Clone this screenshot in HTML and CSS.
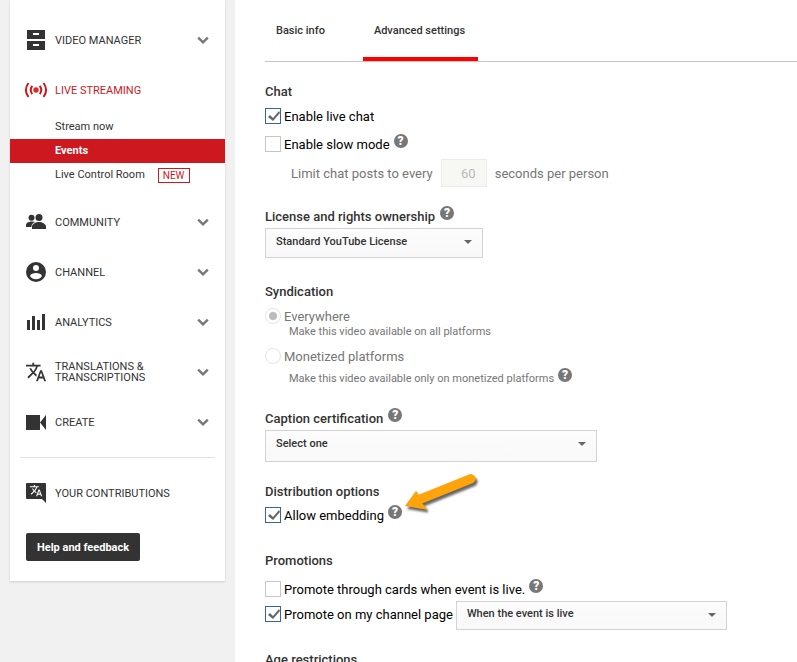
FILE: index.html
```html
<!DOCTYPE html>
<html lang="en">
<head>
    <meta charset="UTF-8">
    <meta name="viewport" content="width=device-width, initial-scale=1.0">
    <title>Live event - Advanced settings</title>
    <link rel="stylesheet" href="styles.css">
</head>
<body>
    <div class="page">
        <aside class="sidebar">
            <nav>
                <a class="nav-item" href="#">
                    <svg class="icon" viewBox="0 0 22 22"><path fill-rule="evenodd" d="M2 1h18v9H2zM8 4v2h6V4zM2 12h18v9H2zM8 15v2h6v-2z"/></svg>
                    <span>VIDEO MANAGER</span>
                    <svg class="chevron" viewBox="0 0 10 8"><path d="M1 2l4 4 4-4"/></svg>
                </a>
                <a class="nav-item active" href="#">
                    <svg class="icon" viewBox="0 0 22 22"><circle cx="11" cy="11" r="2.7"/><path class="wave" d="M7.3 6.8q-3.2 4.200 0 8.400M14.700 6.800q3.200 4.200 0 8.400M3.500 4q-5.200 7 0 14M18.500 4q5.200 7 0 14"/></svg>
                    <span>LIVE STREAMING</span>
                </a>
                <ul class="submenu">
                    <li><a href="#">Stream now</a></li>
                    <li class="selected"><a href="#">Events</a></li>
                    <li><a href="#">Live Control Room</a><span class="new">NEW</span></li>
                </ul>
                <a class="nav-item" href="#">
                    <svg class="icon" viewBox="0 0 22 22"><circle cx="6.500" cy="6.700" r="3"/><circle cx="14" cy="6.500" r="3.500"/><path d="M1 16v-2c0-2.500 3.500-3.500 6-3.500 1.200 0 2.300.2 3.200.5C8 12 6.500 13.300 6.300 16zM7 18v-2.500c0-2.500 4-4.500 7-4.500s7 2 7 4.500V18z"/></svg>
                    <span>COMMUNITY</span>
                    <svg class="chevron" viewBox="0 0 10 8"><path d="M1 2l4 4 4-4"/></svg>
                </a>
                <a class="nav-item" href="#">
                    <svg class="icon" viewBox="0 0 22 22"><path fill-rule="evenodd" d="M11 1a10 10 0 1 0 0 20 10 10 0 0 0 0-20zM11 4a3 3 0 1 1 0 6 3 3 0 0 1 0-6zM11 18.200a7.200 7.200 0 0 1-6-3.200c0-2 4-3.100 6-3.100s6 1.100 6 3.100a7.200 7.200 0 0 1-6 3.200z"/></svg>
                    <span>CHANNEL</span>
                    <svg class="chevron" viewBox="0 0 10 8"><path d="M1 2l4 4 4-4"/></svg>
                </a>
                <a class="nav-item" href="#">
                    <svg class="icon" viewBox="0 0 22 22"><path d="M2 7h3v10H2zM7 3h3v14H7zM12 7h3v10h-3zM17 1h3v16h-3z" transform="translate(0 2)"/></svg>
                    <span>ANALYTICS</span>
                    <svg class="chevron" viewBox="0 0 10 8"><path d="M1 2l4 4 4-4"/></svg>
                </a>
                <a class="nav-item" href="#">
                    <svg class="icon" viewBox="0 0 24 24"><path d="M12.870 15.070l-2.540-2.510.03-.03A17.520 17.520 0 0 0 14.070 6H17V4h-7V2H8v2H1v2h11.170C11.500 7.920 10.440 9.750 9 11.350 8.070 10.320 7.300 9.190 6.690 8h-2c.73 1.630 1.730 3.170 2.980 4.560l-5.090 5.020L4 19l5-5 3.110 3.110.76-2.040zM18.500 10h-2L12 22h2l1.120-3h4.750L21 22h2l-4.500-12zm-2.620 7l1.620-4.330L19.120 17h-3.240z"/></svg>
                    <span>TRANSLATIONS &amp; TRANSCRIPTIONS</span>
                    <svg class="chevron" viewBox="0 0 10 8"><path d="M1 2l4 4 4-4"/></svg>
                </a>
                <a class="nav-item" href="#">
                    <svg class="icon" viewBox="0 0 22 22"><path d="M1 4h14v15H1zM15 11.500L21 4v15z"/></svg>
                    <span>CREATE</span>
                    <svg class="chevron" viewBox="0 0 10 8"><path d="M1 2l4 4 4-4"/></svg>
                </a>
                <hr>
                <a class="nav-item" href="#">
                    <svg class="icon" viewBox="0 0 22 22"><path d="M2 1h18a1 1 0 0 1 1 1v19l-4-4H2a1 1 0 0 1-1-1V2a1 1 0 0 1 1-1z"/><g transform="translate(4.300 2) scale(.56)"><path class="cutout" d="M12.870 15.070l-2.540-2.510.03-.03A17.520 17.520 0 0 0 14.070 6H17V4h-7V2H8v2H1v2h11.170C11.500 7.920 10.440 9.750 9 11.350 8.070 10.320 7.300 9.190 6.690 8h-2c.73 1.630 1.730 3.170 2.980 4.560l-5.090 5.020L4 19l5-5 3.110 3.110.76-2.040zM18.500 10h-2L12 22h2l1.120-3h4.750L21 22h2l-4.500-12zm-2.620 7l1.620-4.330L19.120 17h-3.240z"/></g></svg>
                    <span>YOUR CONTRIBUTIONS</span>
                </a>
            </nav>
            <button class="feedback" type="button">Help and feedback</button>
        </aside>

        <main>
            <div class="tabs">
                <a href="#">Basic info</a>
                <a class="current" href="#">Advanced settings</a>
            </div>
            <form>
                <section>
                    <h3>Chat</h3>
                    <div class="row">
                        <input type="checkbox" id="live-chat" checked>
                        <label for="live-chat">Enable live chat</label>
                    </div>
                    <div class="row slow">
                        <input type="checkbox" id="slow-mode">
                        <label for="slow-mode">Enable slow mode</label>
                        <button class="help" type="button">?</button>
                    </div>
                    <div class="limit">
                        <label for="seconds">Limit chat posts to every</label>
                        <input type="text" id="seconds" value="60" disabled>
                        <span>seconds per person</span>
                    </div>
                </section>

                <section class="wide">
                    <h3><label for="license">License and rights ownership</label> <button class="help" type="button">?</button></h3>
                    <div class="select license">
                        <select id="license"><option>Standard YouTube License</option></select>
                    </div>
                </section>

                <section class="muted">
                    <h3>Syndication</h3>
                    <div class="row">
                        <input type="radio" name="syndication" id="everywhere" checked disabled>
                        <label for="everywhere">Everywhere</label>
                    </div>
                    <p class="near">Make this video available on all platforms</p>
                    <div class="row">
                        <input type="radio" name="syndication" id="monetized" disabled>
                        <label for="monetized">Monetized platforms</label>
                    </div>
                    <p>Make this video available only on monetized platforms <button class="help" type="button">?</button></p>
                </section>

                <section>
                    <h3><label for="caption">Caption certification</label> <button class="help" type="button">?</button></h3>
                    <div class="select caption">
                        <select id="caption"><option>Select one</option></select>
                    </div>
                </section>

                <section class="wide">
                    <h3>Distribution options</h3>
                    <div class="row embed">
                        <input type="checkbox" id="embedding" checked>
                        <label for="embedding">Allow embedding</label>
                        <button class="help" type="button">?</button>
                        <svg class="pointer" viewBox="0 0 80 44"><path d="M2 34L12.500 19.500q2-1 2.500 3.500L66 2.500a4.700 4.700 0 0 1 4 8.500L19 31.500q5 3.500 4 6z"/></svg>
                    </div>
                </section>

                <section>
                    <h3>Promotions</h3>
                    <div class="row cards">
                        <input type="checkbox" id="cards">
                        <label for="cards">Promote through cards when event is live.</label>
                        <button class="help" type="button">?</button>
                    </div>
                    <div class="row channel">
                        <input type="checkbox" id="channel" checked>
                        <label for="channel">Promote on my channel page</label>
                        <div class="select when">
                            <select aria-label="When to promote"><option>When the event is live</option></select>
                        </div>
                    </div>
                </section>

                <section>
                    <h3>Age restrictions</h3>
                </section>
            </form>
        </main>
    </div>
</body>
</html>
```
FILE: styles.css
```css
* { box-sizing: border-box; }
body {
    margin: 0;
    height: 100vh;
    overflow: hidden;
    background: #f1f1f1;
    color: #333;
    font-family: Roboto, Arial, sans-serif;
    font-size: 13px;
}
a { color: inherit; text-decoration: none; }
button, input, select { font-family: inherit; margin: 0; }

.page {
    display: flex;
    align-items: flex-start;
    gap: 10px;
    padding-left: 10px;
}

/* sidebar */
.sidebar {
    flex: 0 0 215px;
    padding: 15px 0 20px;
    background: #fff;
    box-shadow: 0 1px 2px rgba(0,0,0,.15);
}
.nav-item {
    display: flex;
    align-items: center;
    height: 50px;
    padding: 0 16px 0 15px;
    font-size: 11px;
    line-height: 11px;
}
.nav-item span { flex: 1; margin-left: 8px; padding-right: 24px; }
.icon { width: 22px; height: 22px; fill: #333; }
.icon .cutout { fill: #fff; }
.chevron { width: 12px; height: 10px; fill: none; stroke: #777; stroke-width: 2; }
.active { color: #cc181e; }
.active .icon { fill: #e02a20; overflow: visible; }
.active .wave { fill: none; stroke: #cc181e; stroke-width: 2; }
.submenu {
    list-style: none;
    margin: 0 0 10px;
    padding: 0;
    font-size: 11px;
}
.submenu li {
    display: flex;
    align-items: center;
    height: 24px;
    padding-left: 45px;
    line-height: 22px;
}
.submenu .selected { background: #cc181e; color: #fff; font-weight: bold; }
.new {
    margin-left: 13px;
    padding: 0 4px;
    border: 1px solid #cc181e;
    color: #cc181e;
    font-size: 10px;
    line-height: 13px;
}
hr {
    height: 1px;
    margin: 10px;
    border: 0;
    background: #e2e2e2;
}
.feedback {
    display: block;
    height: 28px;
    margin: 15px 0 0 16px;
    padding: 0 11px;
    border: 0;
    border-radius: 2px;
    background: #333;
    color: #fff;
    font-size: 11px;
    font-weight: bold;
}

/* settings */
main {
    flex: 1;
    min-width: 0;
    min-height: 100vh;
    padding-left: 30px;
    background: #fff;
}
.tabs {
    display: flex;
    gap: 27px;
    height: 62px;
    margin-bottom: 20px;
    border-bottom: 1px solid #c6c6c6;
    font-size: 11px;
    font-weight: 500;
    line-height: 62px;
}
.tabs a { height: 61px; padding: 0 11px; }
.tabs .current { border-bottom: 4px solid #f00; padding-right: 13px; }
section { margin-bottom: 20px; }
.wide { margin-bottom: 24px; }
h3 {
    display: flex;
    gap: 5px;
    margin: 0 0 1px;
    font-size: 13px;
    font-weight: 500;
    line-height: 20px;
}
.row {
    display: flex;
    align-items: center;
    gap: 3px;
    position: relative;
    height: 26px;
    color: #000;
}
.row label { padding-top: 1px; }
.slow { height: 30px; }
.embed { height: 24px; }
.cards { height: 28px; margin-top: 4px; }
.channel { height: 29px; margin-top: -2px; }
.channel input, .channel label { margin-bottom: 3px; }
.muted, .muted .row { color: #767676; }
.muted h3 { color: #333; }
p {
    display: flex;
    gap: 4px;
    margin: 0 0 0 24px;
    font-size: 11px;
    line-height: 20px;
}
.near { line-height: 14px; margin-top: -4px; margin-bottom: 4px; }

.help {
    flex: none;
    width: 14px;
    height: 14px;
    padding: 0;
    border: 0;
    border-radius: 50%;
    background: #777;
    color: #fff;
    font-size: 12px;
    font-weight: 900;
    line-height: 14px;
}
.row .help { margin: 0 0 6px 1px; }
h3 .help, p .help { margin-top: -1px; }

input[type=checkbox], input[type=radio] {
    appearance: none;
    flex: none;
    width: 16px;
    height: 16px;
    border: 1px solid #c6c6c6;
    background: #fff;
}
input[type=checkbox]:checked { border-color: #36649c; }
input[type=checkbox]:checked::before {
    content: "";
    display: block;
    width: 14px;
    height: 14px;
    background: #666;
    clip-path: polygon(2px 8px, 4px 6px, 7px 9px, 13px 2px, 14px 4px, 7px 12px);
}
input[type=radio] { border-radius: 50%; border-color: #e3e3e3; }
input[type=radio]:checked::before {
    content: "";
    display: block;
    width: 8px;
    height: 8px;
    margin: 3px;
    border-radius: 50%;
    background: #bbb;
}

.limit {
    display: flex;
    align-items: center;
    gap: 8px;
    padding-left: 26px;
    color: #767676;
}
.limit input {
    width: 46px;
    height: 28px;
    padding: 0 10px;
    border: 1px solid #ebebeb;
    background: #f7f8f4;
    color: #b8b8b8;
    font-size: 13px;
    text-align: right;
}

.select { position: relative; height: 30px; }
.select select {
    appearance: none;
    width: 100%;
    height: 100%;
    padding: 0 30px 4px 10px;
    border: 1px solid #d3d3d3;
    border-radius: 0;
    background: linear-gradient(#fcfcfc, #f8f8f8);
    color: #333;
    font-size: 11px;
    font-weight: 500;
}
.select::after {
    content: "";
    position: absolute;
    top: 12px;
    right: 11px;
    border: 4px solid transparent;
    border-top-color: #666;
    border-bottom: 0;
}
.license { width: 218px; }
.caption { width: 332px; height: 32px; }
.caption select { padding-bottom: 6px; }
.when { width: 271px; height: 29px; }

/* arrow drawn over the embedding option */
.pointer {
    position: absolute;
    left: 138px;
    top: -31px;
    width: 80px;
    height: 44px;
    overflow: visible;
    fill: #ffa30a;
    filter: drop-shadow(2px 3px 1px rgba(0,0,0,.6));
}
```
